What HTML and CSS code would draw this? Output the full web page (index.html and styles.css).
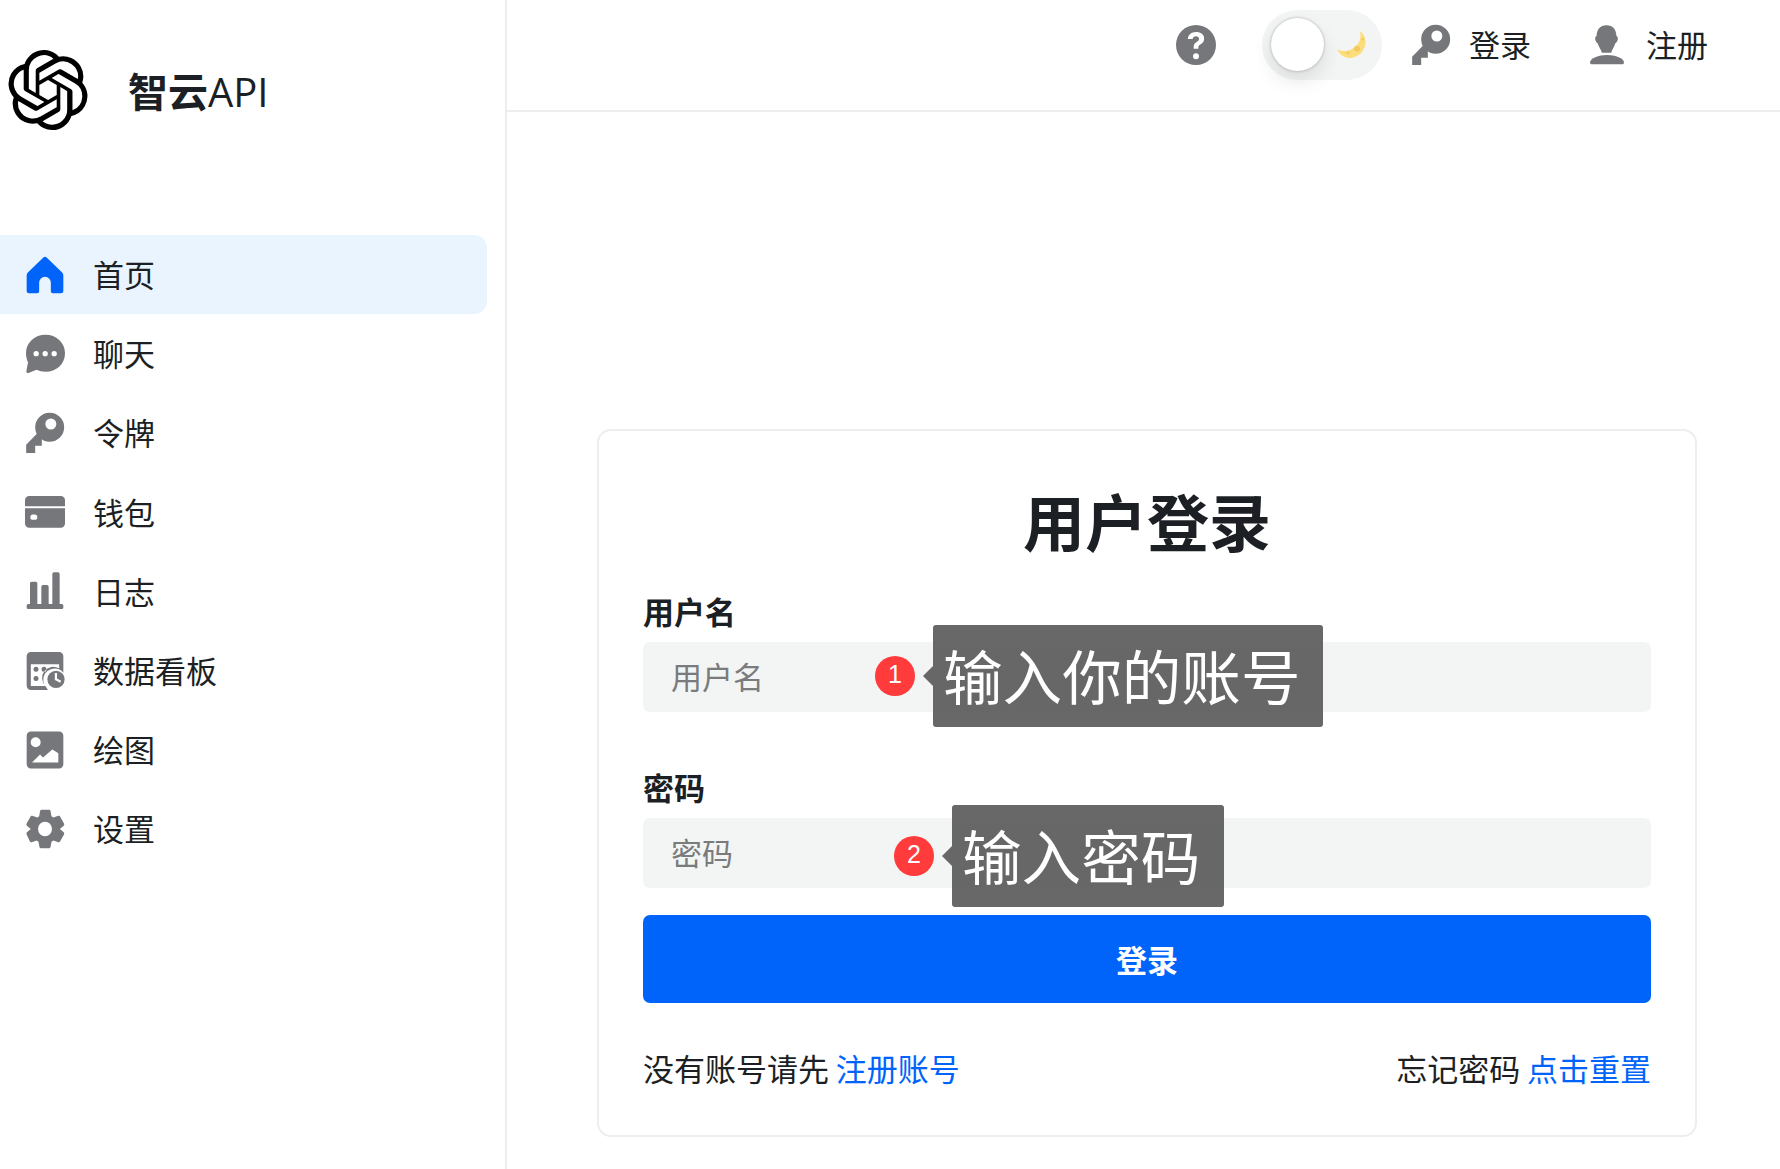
FILE: index.html
```html
<!DOCTYPE html>
<html lang="zh-CN">
<head>
<meta charset="utf-8">
<title>智云API</title>
<link rel="stylesheet" href="styles.css">
</head>
<body>
<div class="app">
  <aside class="sidebar">
    <div class="brand">
      <svg class="brand-logo" viewBox="0 0 24 24"><path d="M22.2819 9.8211a5.9847 5.9847 0 0 0-.5157-4.9108 6.0462 6.0462 0 0 0-6.5098-2.9A6.0651 6.0651 0 0 0 4.9807 4.1818a5.9847 5.9847 0 0 0-3.9977 2.9 6.0462 6.0462 0 0 0 .7427 7.0966 5.98 5.98 0 0 0 .511 4.9107 6.051 6.051 0 0 0 6.5146 2.9001A5.9847 5.9847 0 0 0 13.2599 24a6.0557 6.0557 0 0 0 5.7718-4.2058 5.9894 5.9894 0 0 0 3.9977-2.9001 6.0557 6.0557 0 0 0-.7475-7.0729zm-9.022 12.6081a4.4755 4.4755 0 0 1-2.8764-1.0408l.1419-.0804 4.7783-2.7582a.7948.7948 0 0 0 .3927-.6813v-6.7369l2.02 1.1686a.071.071 0 0 1 .038.052v5.5826a4.504 4.504 0 0 1-4.4945 4.4944zm-9.6607-4.1254a4.4708 4.4708 0 0 1-.5346-3.0137l.142.0852 4.783 2.7582a.7712.7712 0 0 0 .7806 0l5.8428-3.3685v2.3324a.0804.0804 0 0 1-.0332.0615L9.74 19.9502a4.4992 4.4992 0 0 1-6.1408-1.6464zM2.3408 7.8956a4.485 4.485 0 0 1 2.3655-1.9728V11.6a.7664.7664 0 0 0 .3879.6765l5.8144 3.3543-2.0201 1.1685a.0757.0757 0 0 1-.071 0l-4.8303-2.7865A4.504 4.504 0 0 1 2.3408 7.872zm16.5963 3.8558L13.1038 8.364 15.1192 7.2a.0757.0757 0 0 1 .071 0l4.8303 2.7913a4.4944 4.4944 0 0 1-.6765 8.1042v-5.6772a.79.79 0 0 0-.407-.667zm2.0107-3.0231l-.142-.0852-4.7735-2.7818a.7759.7759 0 0 0-.7854 0L9.409 9.2297V6.8974a.0662.0662 0 0 1 .0284-.0615l4.8303-2.7866a4.4992 4.4992 0 0 1 6.6802 4.66zM8.3065 12.863l-2.02-1.1638a.0804.0804 0 0 1-.038-.0567V6.0742a4.4992 4.4992 0 0 1 7.3757-3.4537l-.142.0805L8.704 5.459a.7948.7948 0 0 0-.3927.6813zm1.0976-2.3654l2.602-1.4998 2.6069 1.4998v2.9994l-2.5974 1.4997-2.6067-1.4997Z"/></svg>
      <span class="brand-name">智云<span class="brand-latin">API</span></span>
    </div>
    <nav class="nav">
      <a class="nav-item is-active">
        <svg class="icon" viewBox="0 0 24 24"><path d="M11.2 1.400a1.200 1.200 0 0 1 1.600 0l9.500 9.100a2.200 2.200 0 0 1 .7 1.600v9.400a1.500 1.500 0 0 1-1.500 1.500h-4.800a1.200 1.200 0 0 1-1.200-1.200v-5.300a3.500 3.500 0 0 0-7 0v5.300a1.200 1.200 0 0 1-1.200 1.200H2.500A1.500 1.500 0 0 1 1 21.500v-9.400a2.200 2.200 0 0 1 .7-1.600z"/></svg>
        <span class="nav-label">首页</span>
      </a>
      <a class="nav-item">
        <svg class="icon" viewBox="0 0 24 24"><path fill-rule="evenodd" d="M12.300.4C18.700.4 24 5 24 11.500s-5.300 11.200-11.700 11.200c-2 0-3.800-.5-5.400-1.200l-4.800 1.900a1 1 0 0 1-1.300-1.100l1-5.200C1.100 15.300.6 13.500.6 11.500.6 5 5.900.4 12.300.4zM6.700 10.200a1.600 1.600 0 1 0 0 3.200 1.600 1.600 0 0 0 0-3.200zm5.400 0a1.600 1.600 0 1 0 0 3.200 1.600 1.600 0 0 0 0-3.200zm5.400 0a1.600 1.600 0 1 0 0 3.200 1.600 1.600 0 0 0 0-3.200z"/></svg>
        <span class="nav-label">聊天</span>
      </a>
      <a class="nav-item">
        <svg class="icon" viewBox="0 0 24 24"><path fill-rule="evenodd" d="M14.800 -.2a8.700 8.700 0 1 1 0 17.400 8.700 8.700 0 0 1 0-17.400zM15.500 3.300a3.300 3.300 0 1 0 0 6.600 3.300 3.300 0 0 0 0-6.600z"/><path d="M.7 19 8 11.500 13 16 12 15.600H10.100V19.600H6.100V24H.7z"/></svg>
        <span class="nav-label">令牌</span>
      </a>
      <a class="nav-item">
        <svg class="icon" viewBox="0 0 24 24"><path fill-rule="evenodd" d="M0 9.800h24v9.100a2.500 2.500 0 0 1-2.500 2.500h-19A2.500 2.500 0 0 1 0 18.900zm4.800 3.700a1.600 1.600 0 0 0 0 3.200h1a1.600 1.600 0 0 0 0-3.200zM2.500 2.400h19A2.500 2.500 0 0 1 24 4.900V8.600H0V4.900a2.500 2.500 0 0 1 2.500-2.500z"/></svg>
        <span class="nav-label">钱包</span>
      </a>
      <a class="nav-item">
        <svg class="icon" viewBox="0 0 24 24"><path d="M3 7.400a1 1 0 0 1 1-1h2.400a1 1 0 0 1 1 1V20H3zM9.800 9.400a1 1 0 0 1 1-1h2.400a1 1 0 0 1 1 1V20H9.800zM16.400 1.800a1 1 0 0 1 1-1h2.400a1 1 0 0 1 1 1V20h-4.400zM1.900 19.800h20.200a.9.9 0 0 1 .9.900v1.200a.9.9 0 0 1-.9.900H1.900a.9.9 0 0 1-.9-.9v-1.200a.9.9 0 0 1 .9-.9z"/></svg>
        <span class="nav-label">日志</span>
      </a>
      <a class="nav-item">
        <svg class="icon" viewBox="0 0 24 24"><path fill-rule="evenodd" d="M3.500.6h17A2.500 2.500 0 0 1 23 3.100v9.900a6.700 6.700 0 0 0-10.500 8.500l1.300 1.900H3.500A2.500 2.500 0 0 1 1 20.900V3.100A2.500 2.500 0 0 1 3.500.6zM3.500 8v13h8.800a6.700 6.700 0 0 1 8.200-10.500V8zM6.600 9.500a1.500 1.500 0 1 0 0 3 1.500 1.500 0 0 0 0-3zM11.400 9.500a1.500 1.500 0 1 0 0 3 1.500 1.500 0 0 0 0-3zM6.600 15a1.500 1.500 0 1 0 0 3 1.500 1.500 0 0 0 0-3z"/><path fill-rule="evenodd" d="M18.600 11.800a5.200 5.200 0 1 1 0 10.400 5.200 5.200 0 0 1 0-10.400zm-.7 1.400v4.200l3.200 1.600.6-1.200-2.500-1.300v-3.300z"/></svg>
        <span class="nav-label">数据看板</span>
      </a>
      <a class="nav-item">
        <svg class="icon" viewBox="0 0 24 24"><path fill-rule="evenodd" d="M3.500.9h17A2.500 2.500 0 0 1 23 3.400v17.200a2.500 2.500 0 0 1-2.500 2.500h-17A2.500 2.500 0 0 1 1 20.600V3.400A2.500 2.500 0 0 1 3.500.9zM6.400 4.300a3 3 0 1 0 0 6 3 3 0 0 0 0-6zM4.200 19.500 9 14.700l1.800 1.800 5.600-4.800 3.600 2.300v5.500z"/></svg>
        <span class="nav-label">绘图</span>
      </a>
      <a class="nav-item">
        <svg class="icon" viewBox="0 0 24 24"><path transform="translate(12 12) scale(.95 1) translate(-12 -12)" fill-rule="evenodd" d="M9.500.4h5a1 1 0 0 1 1 .8l.6 3.200 1.200.7 3.100-1a1 1 0 0 1 1.200.5l2.400 4.100a1 1 0 0 1-.2 1.300L21.400 12l2.400 2a1 1 0 0 1 .2 1.300l-2.400 4.100a1 1 0 0 1-1.200.5l-3.100-1-1.200.7-.6 3.200a1 1 0 0 1-1 .8h-5a1 1 0 0 1-1-.8l-.6-3.200-1.200-.7-3.100 1a1 1 0 0 1-1.200-.5L.4 15.300A1 1 0 0 1 .6 14L3 12 .6 10A1 1 0 0 1 .4 8.700l2.400-4.100a1 1 0 0 1 1.200-.5l3.100 1 1.200-.7.600-3.200a1 1 0 0 1 1-.8zM12 7.600a4.400 4.400 0 1 0 0 8.800 4.400 4.400 0 0 0 0-8.800z"/></svg>
        <span class="nav-label">设置</span>
      </a>
    </nav>
  </aside>

  <div class="main">
    <header class="topbar">
      <svg class="icon help" viewBox="0 0 24 24"><path fill-rule="evenodd" d="M12 0a12 12 0 1 1 0 24 12 12 0 0 1 0-24zm0 17a1.800 1.800 0 1 0 0 3.600 1.800 1.800 0 0 0 0-3.600zM12 4.200c-2.800 0-4.800 1.700-4.900 4.200h2.900c.1-1 .9-1.600 2-1.600s1.800.6 1.800 1.500c0 .8-.4 1.300-1.400 1.900-1.300.8-1.900 1.700-1.800 3.200v.9h2.800v-.7c0-.8.3-1.300 1.400-2 1.300-.8 2.100-1.900 2.100-3.500 0-2.300-2-3.900-4.900-3.900z"/></svg>
      <div class="theme-toggle">
        <span class="knob"></span>
        <svg class="moon" viewBox="0 0 29 27"><path d="M22.600 0C26 2 28.500 6 28.500 11 28.500 20 21 27 12 27 7 27 2.500 23.500 0 18.300 2 19.500 5 20 7.500 20 15.500 20 23.500 13 23.500 5 23.500 3 23.200 1.500 22.600 0z"/><circle class="moon-spot" cx="20" cy="17.700" r="3"/><circle class="moon-spot" cx="11" cy="21.700" r="1.500"/><circle class="moon-spot" cx="25.700" cy="8.300" r="1.200"/></svg>
      </div>
      <a class="top-link">
        <svg class="icon" viewBox="0 0 24 24"><path fill-rule="evenodd" d="M14.800 -.2a8.700 8.700 0 1 1 0 17.400 8.700 8.700 0 0 1 0-17.400zM15.500 3.300a3.300 3.300 0 1 0 0 6.600 3.300 3.300 0 0 0 0-6.600z"/><path d="M.7 19 8 11.500 13 16 12 15.600H10.100V19.600H6.100V24H.7z"/></svg>
        <span class="top-label">登录</span>
      </a>
      <a class="top-link user-link">
        <svg class="icon" viewBox="0 0 24 24"><path d="M11.700.2C15.600.2 17.600 3 17.600 6.500 18.400 7 18.700 8 18.400 9 18.100 10 17.600 10.500 17 11 16.400 13 15 15 14.500 16.600H9C8.500 15 7 13 6.400 11 5.800 10.500 5.300 10 5 9 4.700 8 5 7 5.800 6.500 5.800 3 7.800.2 11.700.2z"/><path d="M12 18C17 18 22.200 20 22.200 22.500 22.200 23.200 21.700 23.600 21 23.600H3C2.300 23.600 1.800 23.200 1.800 22.500 1.800 20 7 18 12 18z"/></svg>
        <span class="top-label">注册</span>
      </a>
    </header>

    <main class="content">
      <section class="card">
        <h1 class="card-title">用户登录</h1>
        <div class="field">
          <label class="field-label">用户名</label>
          <div class="input-wrap">
            <input class="text-input" type="text" placeholder="用户名">
            <div class="hint hint-user">
              <span class="hint-badge">1</span>
              <span class="hint-tip">输入你的账号</span>
            </div>
          </div>
        </div>
        <div class="field field-pass">
          <label class="field-label">密码</label>
          <div class="input-wrap">
            <input class="text-input" type="password" placeholder="密码">
            <div class="hint hint-pass">
              <span class="hint-badge">2</span>
              <span class="hint-tip">输入密码</span>
            </div>
          </div>
        </div>
        <button class="submit" type="button">登录</button>
        <div class="card-foot">
          <span>没有账号请先 <a class="link">注册账号</a></span>
          <span>忘记密码 <a class="link">点击重置</a></span>
        </div>
      </section>
    </main>
  </div>
</div>
</body>
</html>
```

FILE: styles.css
```css
* { box-sizing: border-box; }
html, body { margin: 0; height: 100%; background: #fff; }
body {
  font-family: "Inter", "Noto Sans CJK SC", sans-serif;
  font-size: 31px;
  color: #1c1f23;
  overflow: hidden;
}
.app { display: flex; height: 1169px; }
.sidebar {
  flex: 0 0 507px;
  border-right: 2px solid #eeeeef;
  padding-right: 18px;
}
.brand {
  display: flex;
  align-items: center;
  height: 235px;
  padding: 0 0 55px 8px;
}
.brand-logo { width: 80px; height: 80px; flex: none; }
.brand-name {
  margin: 1px 0 0 40px;
  font-size: 40px;
  font-weight: 700;
  line-height: 1;
  font-family: "Noto Sans CJK SC", sans-serif;
}
.brand-latin { font-weight: 500; font-family: "Open Sans", sans-serif; }
.nav { display: flex; flex-direction: column; }
.nav-item {
  display: flex;
  align-items: center;
  gap: 28px;
  height: 79.2px;
  padding-left: 25px;
  border-radius: 0 13px 13px 0;
}
.nav-label { padding-bottom: 2px; }
.nav-item.is-active { background: #e9f4ff; }
.nav-item.is-active .icon { fill: #0064fa; }
.icon { width: 40px; height: 40px; flex: none; fill: #76777b; overflow: visible; }
.main { flex: 1; min-width: 0; display: flex; flex-direction: column; }
.topbar {
  display: flex;
  align-items: center;
  justify-content: flex-end;
  height: 112px;
  padding: 0 72px 21px 0;
  border-bottom: 2px solid #eeeeef;
}
.help { margin-right: 46px; }
.theme-toggle {
  display: flex;
  align-items: center;
  width: 120px;
  height: 70px;
  padding-left: 9px;
  border-radius: 35px;
  background: #f3f5f5;
  margin-right: 29px;
}
.knob {
  width: 53px;
  height: 53px;
  margin-top: -1px;
  border-radius: 50%;
  background: #fff;
  box-shadow: 0 0 3px rgba(0,0,0,.3), 0 10px 20px rgba(0,0,0,.1);
}
.moon { width: 29px; height: 27px; margin-left: 13px; fill: #fbdd7c; }
.moon-spot { fill: #f2ca62; }
.top-link { display: flex; align-items: center; gap: 18px; }
.top-label { padding-bottom: 2px; }
.user-link { margin-left: 56px; gap: 19px; }
.content { padding: 317px 0 0 90px; }
.card {
  width: 1100px;
  height: 708px;
  padding: 0 44px;
  border: 2px solid #eeeeef;
  border-radius: 14px;
}
.card-title {
  margin: 0;
  padding-top: 46px;
  font-size: 62px;
  line-height: 86px;
  font-weight: 700;
  text-align: center;
  font-family: "Noto Sans CJK SC", sans-serif;
}
.field { margin-top: 24.6px; }
.field-pass { margin-top: 52px; }
.field-label {
  display: block;
  font-weight: 700;
  line-height: 46px;
  margin-bottom: 8px;
  font-family: "Noto Sans CJK SC", sans-serif;
}
.input-wrap { position: relative; }
.text-input {
  display: block;
  width: 100%;
  height: 70px;
  border: 0;
  outline: 0;
  padding: 2px 28px 0;
  border-radius: 7px;
  background: #f3f5f5;
  font: inherit;
  color: inherit;
}
.text-input::placeholder { color: #7a7b7d; opacity: 1; }
.hint { position: absolute; display: flex; align-items: center; }
.hint-user { left: 232px; top: -17px; }
.hint-pass { left: 251px; top: -13px; }
.hint-pass .hint-tip { padding-right: 24px; }
.hint-badge {
  width: 40px;
  height: 40px;
  flex: none;
  border-radius: 50%;
  background: #ff3b3b;
  color: #fff;
  font-family: "Liberation Sans", sans-serif;
  font-size: 25px;
  line-height: 36px;
  text-align: center;
  margin-right: 18px;
}
.hint-tip {
  position: relative;
  height: 102px;
  padding: 0 22px 0 10px;
  font-size: 59.6px;
  line-height: 106px;
  white-space: nowrap;
  color: #fff;
  background: rgba(88,88,88,.9);
  border-radius: 3px;
}
.hint-tip::before {
  content: "";
  position: absolute;
  left: -10px;
  top: 50%;
  margin-top: -10px;
  border: 10px solid transparent;
  border-left: 0;
  border-right-color: rgba(88,88,88,.9);
}
.submit {
  display: block;
  width: 100%;
  height: 88px;
  margin-top: 27px;
  border: 0;
  border-radius: 7px;
  background: #0064fa;
  color: #fff;
  font: inherit;
  font-weight: 700;
  font-family: "Noto Sans CJK SC", sans-serif;
}
.card-foot {
  display: flex;
  justify-content: space-between;
  margin-top: 45px;
  line-height: 44px;
  word-spacing: -2px;
}
.link { color: #0064fa; }
```
